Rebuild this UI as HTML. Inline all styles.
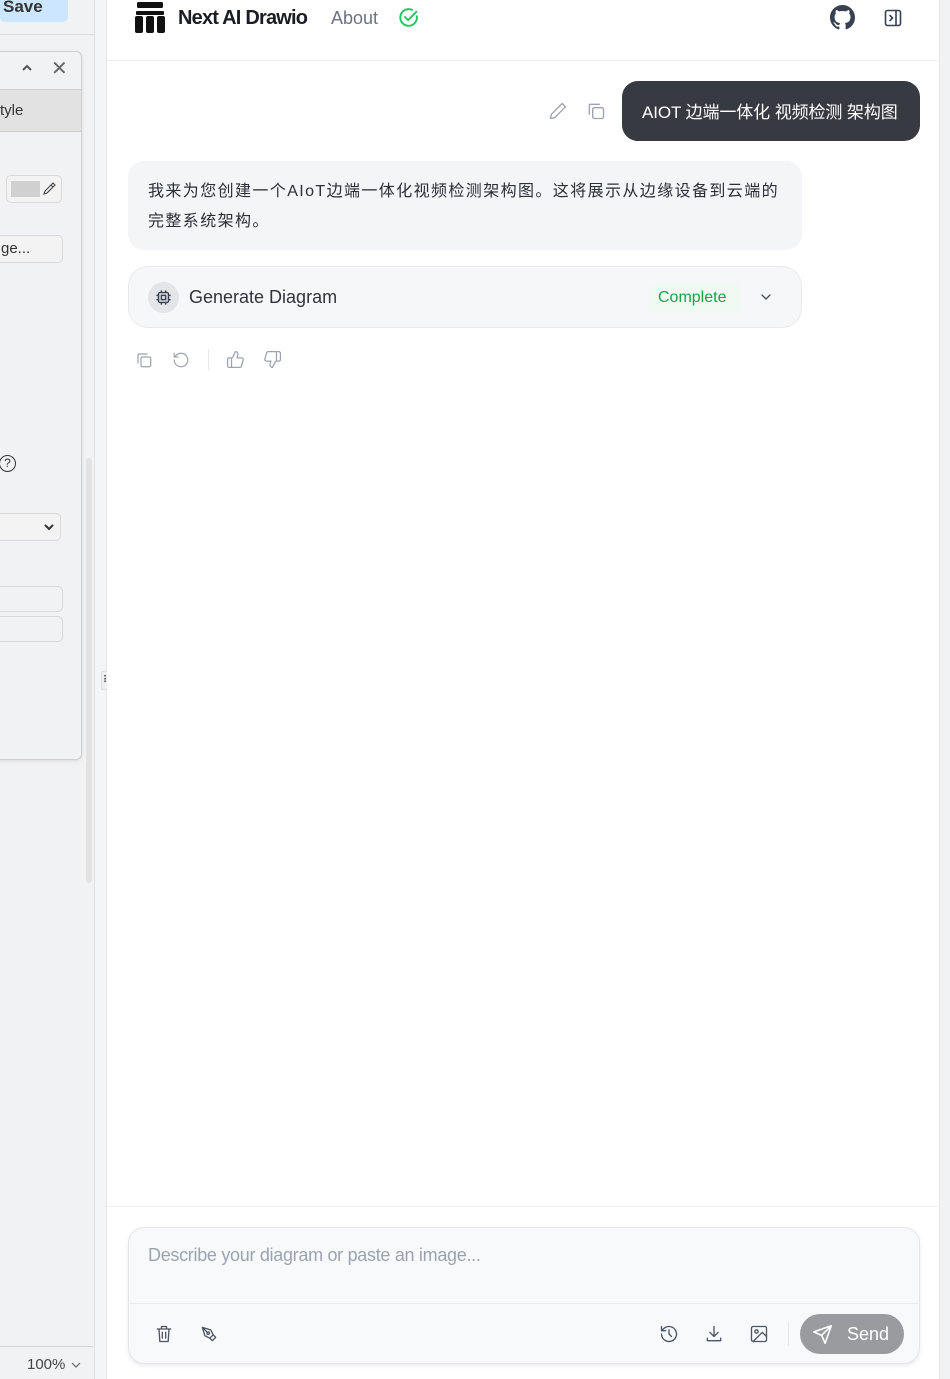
<!DOCTYPE html>
<html><head><meta charset="utf-8"><style>
*{box-sizing:border-box;margin:0;padding:0}
body{width:950px;height:1379px;overflow:hidden;background:#f1f2f4;font-family:"Liberation Sans","Noto Sans CJK SC",sans-serif;position:relative;color:#1f2328}
.abs{position:absolute}
.ico{stroke:#6b7280;fill:none;stroke-width:1.6;stroke-linecap:round;stroke-linejoin:round}
</style></head><body>
<div class="abs" style="left:0;top:0;width:95px;height:1379px;background:#f1f2f4;border-right:1px solid #e1e2e5"></div>
<div class="abs" style="left:0;top:-8px;width:68px;height:30px;background:#cce6ff;border-radius:5px;font-weight:bold;font-size:17px;color:#333;padding:5px 0 0 3px">Save</div>
<div class="abs" style="left:0;top:34px;width:95px;border-top:1px solid #dcdcdc"></div>
<div class="abs" style="left:-5px;top:51px;width:87px;height:709px;background:#f1f2f4;border:1px solid #d0d0d0;border-radius:6px;box-shadow:0 1px 3px rgba(0,0,0,.1)"></div>
<svg class="abs" style="left:20px;top:61px" width="14" height="14" viewBox="0 0 14 14"><path d="M3 9l4-4 4 4" stroke="#555" stroke-width="2" fill="none"/></svg>
<div class="abs" style="left:51px;top:56px;font-size:20px;color:#666">✕</div>
<div class="abs" style="left:0;top:89px;width:81px;height:43px;background:#e2e2e2;border-top:1px solid #d0d0d0;border-bottom:1px solid #d0d0d0;font-size:15px;color:#333;padding:12px 0 0 0">tyle</div>
<div class="abs" style="left:6px;top:175px;width:56px;height:28px;border:1px solid #dadada;border-radius:5px;background:#f3f3f3"><div style="margin:5px 0 0 4px;width:29px;height:16px;background:#d0d0d0"></div></div>
<svg class="abs" style="left:42px;top:181px" width="15" height="15" viewBox="0 0 15 15"><path d="M2 13l1-3 6-6 2 2-6 6zM9 4l2-2 2 2-2 2" stroke="#444" stroke-width="1.1" fill="none"/></svg>
<div class="abs" style="left:-5px;top:235px;width:68px;height:28px;border:1px solid #dadada;border-radius:5px;background:#f3f3f3;font-size:15px;color:#333;padding:4px 0 0 5px">ge...</div>
<div class="abs" style="left:0;top:455px;width:17px;height:17px;border:1.5px solid #333;border-radius:50%;font-size:12px;text-align:center;line-height:14px;color:#333;margin-left:-1px">?</div>
<div class="abs" style="left:-5px;top:513px;width:66px;height:28px;border:1px solid #dadada;border-radius:5px;background:#f3f3f3"></div>
<svg class="abs" style="left:43px;top:521px" width="12" height="12" viewBox="0 0 12 12"><path d="M2 4l4 4 4-4" stroke="#333" stroke-width="2" fill="none"/></svg>
<div class="abs" style="left:-5px;top:586px;width:68px;height:26px;border:1px solid #dadada;border-radius:5px"></div>
<div class="abs" style="left:-5px;top:616px;width:68px;height:26px;border:1px solid #dadada;border-radius:5px"></div>
<div class="abs" style="left:86px;top:458px;width:6px;height:425px;background:#e3e3e3;border-radius:3px"></div>
<div class="abs" style="left:0;top:1346px;width:93px;border-top:1px solid #d5d5d5"></div>
<div class="abs" style="left:27px;top:1356px;font-size:15px;color:#444">100%</div>
<svg class="abs" style="left:70px;top:1360px" width="12" height="10" viewBox="0 0 12 10"><path d="M2 3l4 4 4-4" stroke="#666" stroke-width="1.2" fill="none"/></svg>
<div class="abs" style="left:95px;top:0;width:12px;height:1379px;background:#f4f5f7;border-right:1px solid #e6e7ea"></div>
<div class="abs" style="left:101px;top:671px;width:11px;height:19px;background:#eef0f2;border:1px solid #dcdde0;border-radius:2px;font-size:10px;text-align:center;color:#333;line-height:17px">⠿</div>
<div class="abs" style="left:107px;top:0;width:833px;height:1379px;background:#fff;border-right:1px solid #e6e7ea"></div>
<div class="abs" style="left:107px;top:60px;width:833px;border-top:1px solid #eceef1"></div>
<svg class="abs" style="left:135px;top:2px" width="30" height="31" viewBox="0 0 30 31"><rect x="2" y="0" width="26" height="6" rx="1.5" fill="#111"/><rect x="1" y="9" width="28" height="4" rx="1" fill="#111"/><rect x="0" y="14" width="8" height="17" rx="2" fill="#111"/><rect x="11" y="14" width="8" height="17" rx="2" fill="#111"/><rect x="22" y="14" width="8" height="17" rx="2" fill="#111"/></svg>
<div class="abs" style="left:178px;top:7px;font-size:20px;font-weight:bold;color:#1a1d23;letter-spacing:-0.8px">Next AI Drawio</div>
<div class="abs" style="left:331px;top:8px;font-size:18px;color:#6b7280">About</div>
<svg class="abs" style="left:398px;top:7px" width="21" height="21" viewBox="0 0 24 24"><path d="M21.5 10.5A9.5 9.5 0 1 1 16 3.3" stroke="#22c55e" stroke-width="2.2" fill="none" stroke-linecap="round"/><path d="M8 11.5l3.5 3.5L21 5.5" stroke="#22c55e" stroke-width="2.2" fill="none" stroke-linecap="round" stroke-linejoin="round"/></svg>
<svg class="abs" style="left:830px;top:5px" width="25" height="25" viewBox="0 0 16 16"><path fill="#374151" d="M8 0C3.58 0 0 3.580 0 8c0 3.54 2.29 6.53 5.47 7.59.4.07.55-.17.55-.38 0-.19-.01-.82-.01-1.49-2.01.37-2.530-.49-2.69-.94-.09-.23-.48-.94-.82-1.13-.28-.15-.68-.52-.01-.53.63-.01 1.08.58 1.23.82.72 1.21 1.87.87 2.33.66.07-.52.28-.87.51-1.07-1.78-.2-3.64-.89-3.64-3.95 0-.87.31-1.590.82-2.15-.08-.2-.36-1.02.08-2.12 0 0 .67-.21 2.2.82.64-.18 1.32-.27 2-.27.68 0 1.36.09 2 .27 1.53-1.04 2.2-.82 2.2-.82.44 1.1.16 1.92.08 2.12.51.56.82 1.27.82 2.15 0 3.07-1.87 3.75-3.65 3.950.29.25.54.73.54 1.48 0 1.07-.01 1.93-.01 2.2 0 .21.15.46.55.38A8.013 8.013 0 0016 8c0-4.42-3.58-8-8-8z"/></svg>
<svg class="abs" style="left:883px;top:8px" width="20" height="20" viewBox="0 0 20 20"><rect x="2.5" y="2.5" width="15" height="15" rx="2" stroke="#374151" stroke-width="1.6" fill="none"/><path d="M13 3v14M7 7.5l2.5 2.5L7 12.5" stroke="#374151" stroke-width="1.6" fill="none" stroke-linecap="round"/></svg>
<svg class="abs ico" style="left:548px;top:101px" width="20" height="20" viewBox="0 0 24 24"><path d="M17 3l4 4L8 20l-5 1 1-5z" stroke="#9ca3af"/></svg>
<svg class="abs ico" style="left:586px;top:101px" width="20" height="20" viewBox="0 0 24 24"><rect x="8" y="8" width="13" height="13" rx="2" stroke="#9ca3af"/><path d="M4 16V5a1 1 0 0 1 1-1h11" stroke="#9ca3af"/></svg>
<div class="abs" style="left:622px;top:81px;width:298px;height:60px;background:#373a40;border-radius:16px;color:#fff;font-size:17px;padding:17px 0 0 20px;white-space:nowrap;letter-spacing:-0.1px">AIOT 边端一体化 视频检测 架构图</div>
<div class="abs" style="left:128px;top:161px;width:674px;height:89px;background:#f4f5f7;border-radius:16px;font-size:16px;color:#2b2f36;line-height:30px;padding:16px 20px 0 20px;white-space:nowrap;letter-spacing:1.4px">我来为您创建一个AIoT边端一体化视频检测架构图。这将展示从边缘设备到云端的<br>完整系统架构。</div>
<div class="abs" style="left:128px;top:266px;width:674px;height:62px;background:#f6f7f9;border:1px solid #e8eaee;border-radius:20px"></div>
<div class="abs" style="left:148px;top:282px;width:31px;height:31px;background:#e4e5e8;border-radius:50%"></div>
<svg class="abs" style="left:155px;top:289px" width="17" height="17" viewBox="0 0 24 24" fill="none" stroke="#374151" stroke-width="2"><rect x="5" y="5" width="14" height="14" rx="2"/><rect x="9" y="9" width="6" height="6"/><path d="M9 2v3M15 2v3M9 19v3M15 19v3M2 9h3M2 15h3M19 9h3M19 15h3"/></svg>
<div class="abs" style="left:189px;top:287px;font-size:18px;color:#30343b">Generate Diagram</div>
<div class="abs" style="left:650px;top:283px;width:90px;height:30px;background:#f0f9f2;border-radius:8px;font-size:16px;color:#16a34a;padding:6px 0 0 8px">Complete</div>
<svg class="abs" style="left:758px;top:289px" width="16" height="16" viewBox="0 0 24 24"><path d="M6 9l6 6 6-6" stroke="#4b5563" stroke-width="2" fill="none" stroke-linecap="round"/></svg>
<svg class="abs ico" style="left:135px;top:351px" width="18" height="18" viewBox="0 0 24 24"><rect x="8" y="8" width="13" height="13" rx="2" stroke="#9ca3af"/><path d="M4 16V5a1 1 0 0 1 1-1h11" stroke="#9ca3af"/></svg>
<svg class="abs ico" style="left:172px;top:351px" width="18" height="18" viewBox="0 0 24 24"><path d="M3 12a9 9 0 1 0 3-6.7L3 8" stroke="#9ca3af"/><path d="M3 3v5h5" stroke="#9ca3af"/></svg>
<div class="abs" style="left:208px;top:349px;height:21px;border-left:1px solid #e5e7eb"></div>
<svg class="abs ico" style="left:226px;top:350px" width="19" height="19" viewBox="0 0 24 24"><path d="M7 10v12M15 5.9L14 10h5.8a2 2 0 0 1 1.9 2.5l-2.3 8A2 2 0 0 1 17.5 22H4a2 2 0 0 1-2-2v-8a2 2 0 0 1 2-2h2.8a2 2 0 0 0 1.8-1.1L12 2a3.1 3.1 0 0 1 3 3.9z" stroke="#9ca3af"/></svg>
<svg class="abs ico" style="left:263px;top:350px" width="19" height="19" viewBox="0 0 24 24"><path d="M17 14V2M9 18.1L10 14H4.2a2 2 0 0 1-1.9-2.5l2.3-8A2 2 0 0 1 6.5 2H20a2 2 0 0 1 2 2v8a2 2 0 0 1-2 2h-2.8a2 2 0 0 0-1.8 1.1L12 22a3.1 3.1 0 0 1-3-3.9z" stroke="#9ca3af"/></svg>
<div class="abs" style="left:107px;top:1206px;width:833px;border-top:1px solid #eceef1"></div>
<div class="abs" style="left:128px;top:1227px;width:792px;height:137px;background:#f8f9fb;border:1px solid #e3e5e9;border-radius:16px;box-shadow:0 2px 4px rgba(0,0,0,.08)"></div>
<div class="abs" style="left:129px;top:1303px;width:790px;border-top:1px solid #e8eaee"></div>
<div class="abs" style="left:148px;top:1245px;font-size:18px;color:#9ca3af;letter-spacing:-0.3px">Describe your diagram or paste an image...</div>
<svg class="abs ico" style="left:154px;top:1324px" width="20" height="20" viewBox="0 0 24 24"><path d="M4 6h16M9 6V3h6v3M6 6l1 15h10l1-15M10 10v7M14 10v7" stroke="#4b5563"/></svg>
<svg class="abs ico" style="left:199px;top:1324px" width="20" height="20" viewBox="0 0 24 24"><path d="M4 4l10 3 3 6-4 4-6-3zM4 4l6 6M17 13l3 3-4 4-3-3" stroke="#4b5563"/><circle cx="11" cy="11" r="1.5" stroke="#4b5563"/></svg>
<svg class="abs ico" style="left:659px;top:1324px" width="20" height="20" viewBox="0 0 24 24"><path d="M3 12a9 9 0 1 0 3-6.7L3 8M3 3v5h5M12 7v5l3 3" stroke="#4b5563"/></svg>
<svg class="abs ico" style="left:704px;top:1324px" width="20" height="20" viewBox="0 0 24 24"><path d="M12 3v12M7 10l5 5 5-5M4 17v3h16v-3" stroke="#4b5563"/></svg>
<svg class="abs ico" style="left:749px;top:1324px" width="20" height="20" viewBox="0 0 24 24"><rect x="3" y="3" width="18" height="18" rx="2" stroke="#4b5563"/><circle cx="9" cy="9" r="2" stroke="#4b5563"/><path d="M21 15l-5-5L5 21" stroke="#4b5563"/></svg>
<div class="abs" style="left:788px;top:1322px;height:24px;border-left:1px solid #e5e7eb"></div>
<div class="abs" style="left:800px;top:1314px;width:104px;height:40px;background:#9a9b9e;border-radius:20px"></div>
<svg class="abs" style="left:812px;top:1324px" width="21" height="21" viewBox="0 0 24 24"><path d="M22 2L11 13M22 2l-7 20-4-9-9-4z" stroke="#fff" stroke-width="1.8" fill="none" stroke-linejoin="round"/></svg>
<div class="abs" style="left:847px;top:1324px;font-size:18px;color:#fff">Send</div>
</body></html>
